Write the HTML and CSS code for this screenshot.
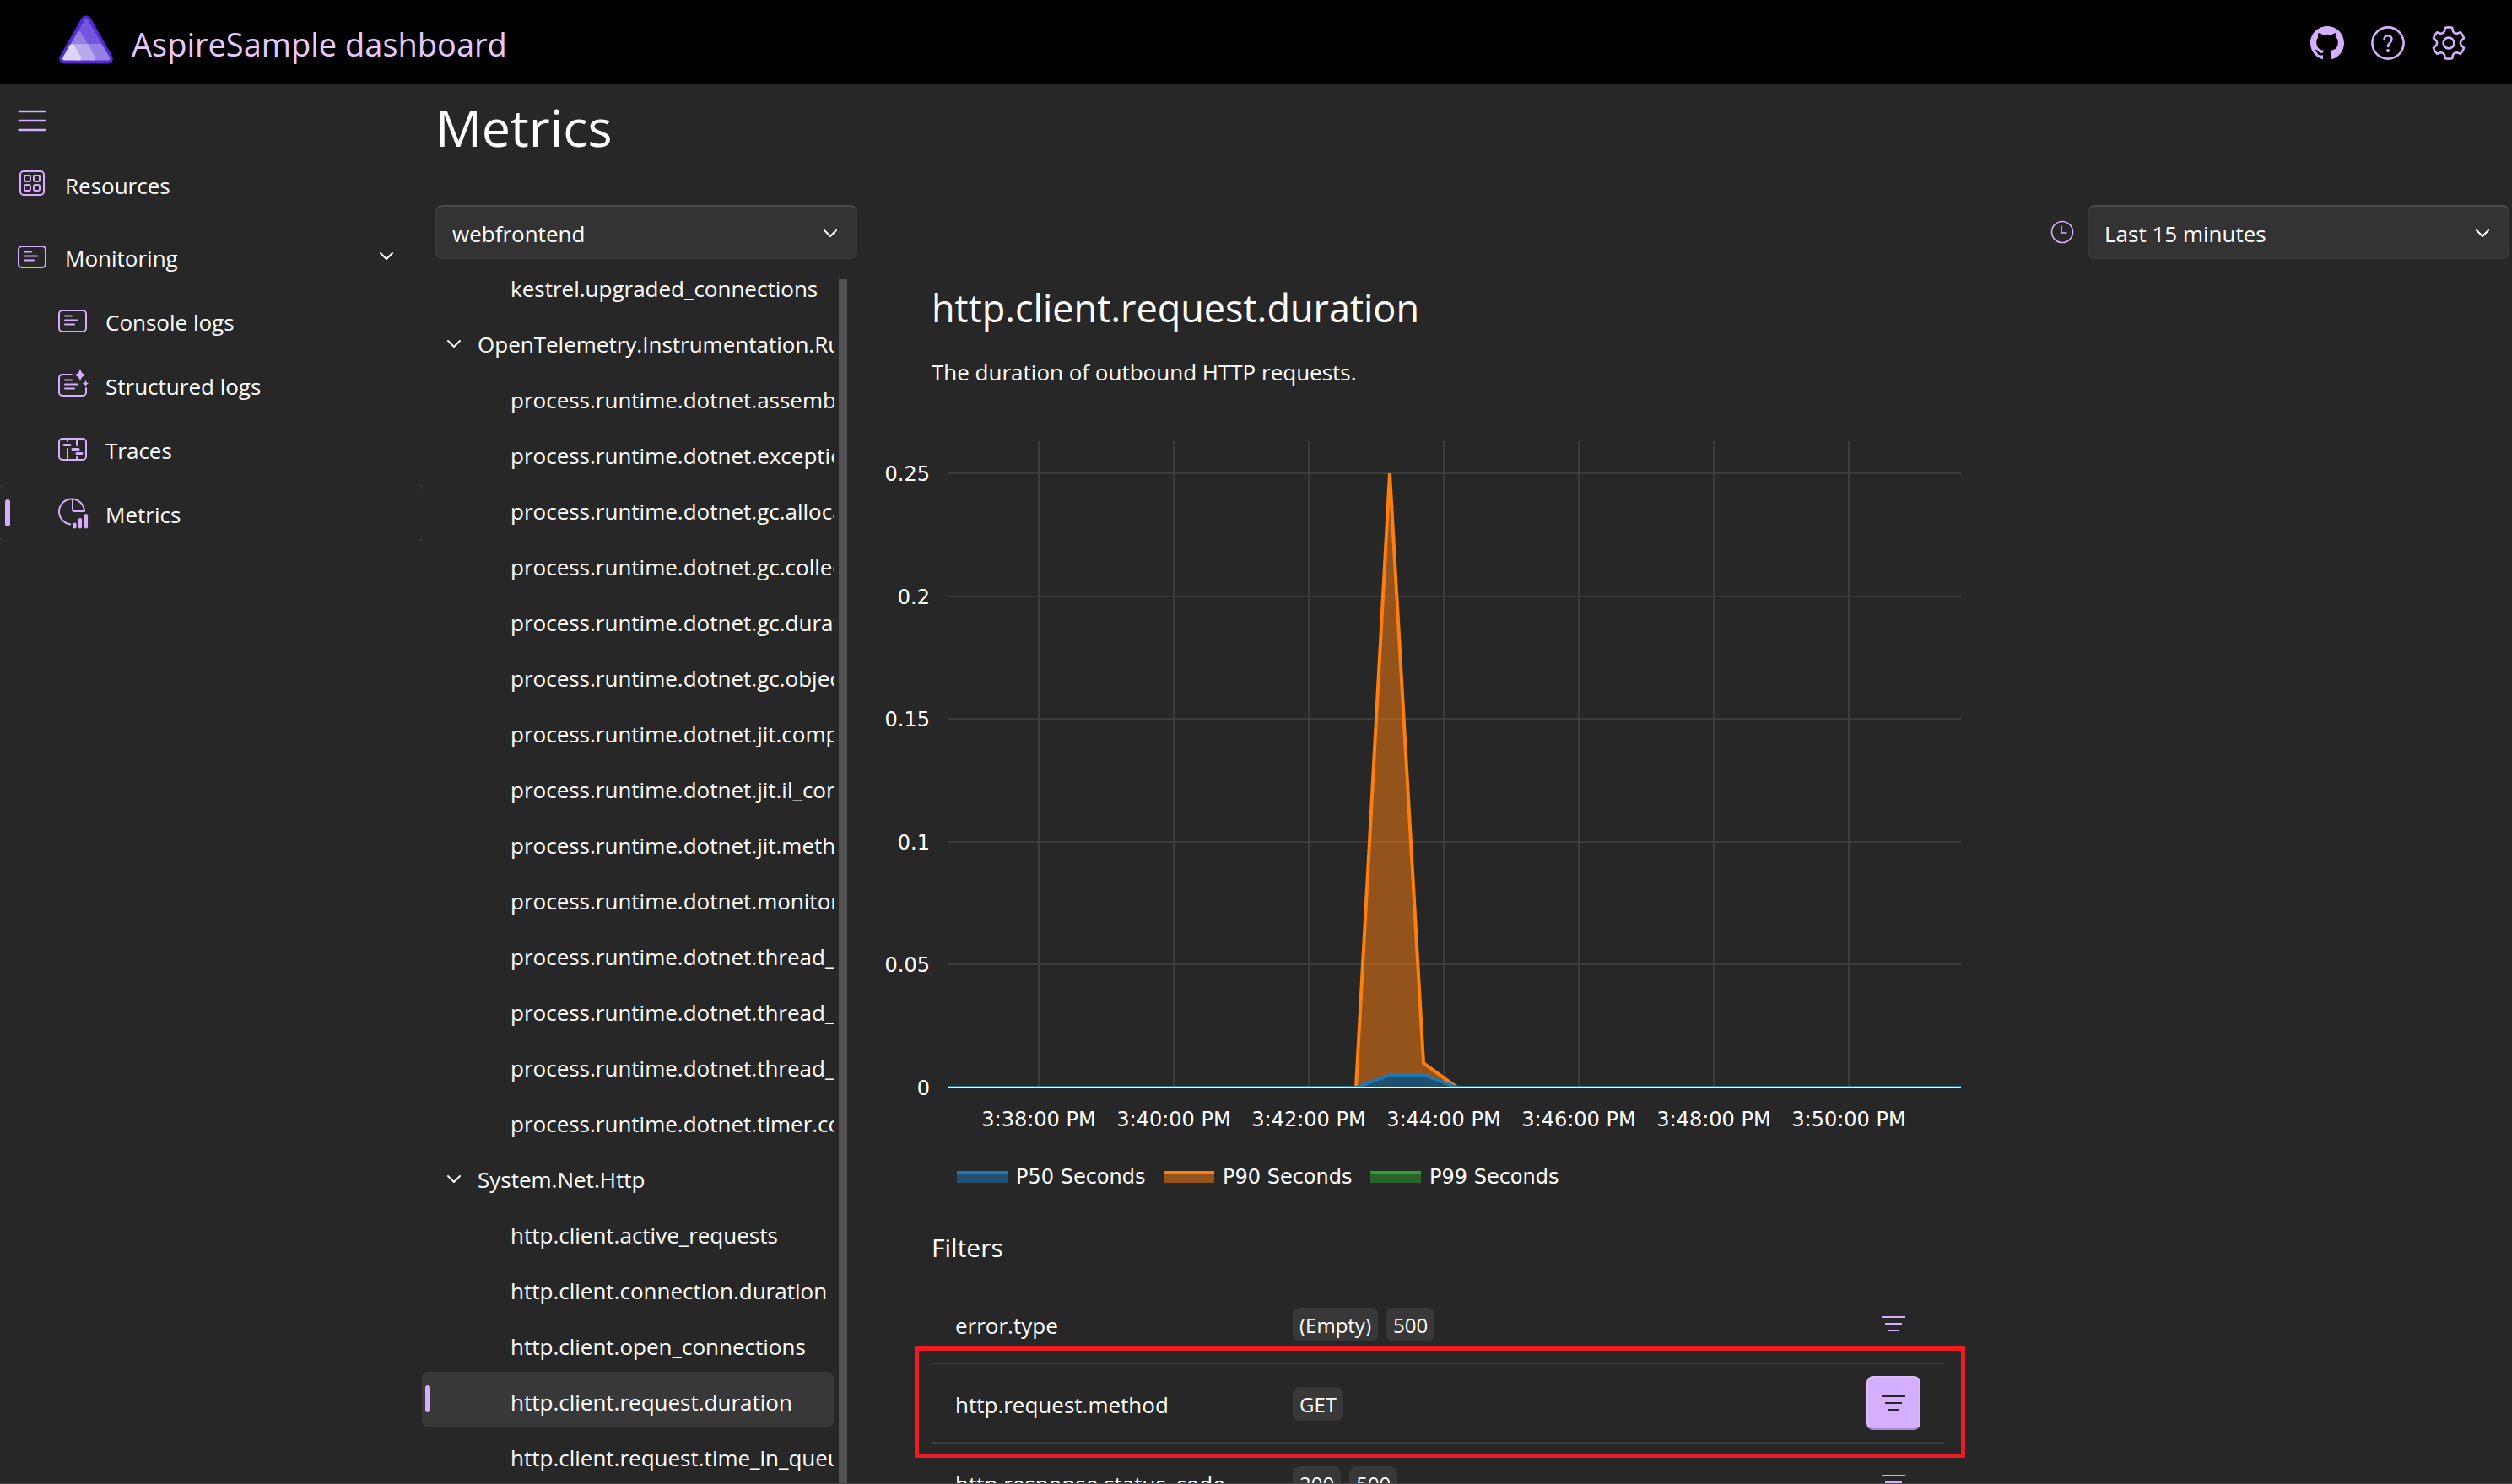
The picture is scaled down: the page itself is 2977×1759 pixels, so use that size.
FILE: index.html
```html
<!DOCTYPE html>
<html lang="en">
<head>
<meta charset="utf-8">
<title>AspireSample dashboard - Metrics</title>
<link rel="stylesheet" href="styles.css">
</head>
<body>
<svg class="sprite" aria-hidden="true">
  <symbol id="chevron" viewBox="0 0 18 12"><path d="M2 2l7 7 7-7" fill="none" stroke="#fff" stroke-width="2" stroke-linecap="round" stroke-linejoin="round"/></symbol>
  <symbol id="filter" viewBox="0 0 28 18"><path d="M0 1h28M4 9h20M8 17h12" fill="none" stroke="currentColor" stroke-width="2"/></symbol>
  <symbol id="console" viewBox="0 0 40 40"><g fill="none" stroke="currentColor" stroke-width="2" stroke-linecap="round"><rect x="4" y="8" width="32" height="25" rx="4"/><path d="M11 14.500h8M11 19.500h15M11 24.500h11"/></g></symbol>
</svg>

<header class="topbar">
  <a class="brand" href="#">
    <svg class="logo" viewBox="0 0 64 58" aria-hidden="true">
      <path d="M26.500 3.500a6.500 6.500 0 0 1 11 0L63 48.500A6 6 0 0 1 58 57.500H6A6 6 0 0 1 1 48.500z" fill="#512bd4"/>
      <path d="M30 6a2.500 2.500 0 0 1 4.400 0L50.500 34H14z" fill="#7455dd"/>
      <path d="M14 34L21.200 21c1.500-2.300 3.800-2.300 5 0L34 34z" fill="#9780e5"/>
      <path d="M28 34H50.500L60 50c1 2 0 3.500-2 3.500H38z" fill="#9780e5"/>
      <path d="M14 34H34.200L43 50c.8 2-.2 3.500-2 3.500H20z" fill="#b9aaee"/>
      <path d="M12.500 35.500c1.500-2 3.800-2 5.200 0L26 50c.8 2-.2 3.500-2 3.500H6.500c-2 0-3-1.500-2-3.500z" fill="#dcd5f6"/>
    </svg>
    <span>AspireSample dashboard</span>
  </a>
  <div class="top-actions">
    <a href="#" aria-label="GitHub repository"><svg viewBox="0 0 16 16" fill="currentColor"><path d="M8 0C3.580 0 0 3.580 0 8c0 3.540 2.290 6.530 5.470 7.590.4.070.55-.17.55-.38 0-.19-.01-.82-.01-1.490-2.010.37-2.530-.49-2.690-.94-.09-.23-.48-.94-.82-1.130-.28-.15-.68-.52-.01-.53.63-.01 1.080.58 1.230.82.72 1.210 1.870.87 2.330.66.07-.52.28-.87.51-1.070-1.780-.2-3.640-.89-3.640-3.950 0-.87.31-1.590.82-2.150-.08-.2-.36-1.020.08-2.120 0 0 .67-.21 2.200.82.64-.18 1.320-.27 2-.27s1.360.09 2 .27c1.530-1.040 2.200-.82 2.200-.82.44 1.100.16 1.920.08 2.120.51.56.82 1.270.82 2.150 0 3.070-1.870 3.750-3.650 3.950.29.25.54.73.54 1.480 0 1.070-.01 1.930-.01 2.200 0 .21.15.46.55.38A8.010 8.010 0 0 0 16 8c0-4.420-3.580-8-8-8z"/></svg></a>
    <button type="button" aria-label="Help"><svg viewBox="0 0 40 40" fill="none" stroke="currentColor" stroke-width="2.600" stroke-linecap="round"><circle cx="20" cy="20" r="18.600"/><path d="M15.500 16c0-3 2-4.700 4.500-4.700s4.500 1.700 4.500 4.400c0 4-4.500 4.300-4.500 8.300"/><circle cx="20" cy="29" r="2" fill="currentColor" stroke="none"/></svg></button>
    <button type="button" aria-label="Settings"><svg viewBox="-20 -20 40 40" fill="none" stroke="currentColor" stroke-width="2.600" stroke-linejoin="round"><path d="M-4.200-18.300Q0-19 4.200-18.300L5-14Q6.600-11 9.800-11.200L14-12.700Q17-9.500 18-5.800L14.800-2.800Q13 0 14.800 2.800L18 5.800Q17 9.500 14 12.700L9.800 11.200Q6.600 11 5 14L4.200 18.300Q0 19-4.200 18.300L-5 14Q-6.600 11-9.800 11.200L-14 12.700Q-17 9.500-18 5.800L-14.800 2.800Q-13 0-14.800-2.800L-18-5.800Q-17-9.500-14-12.700L-9.800-11.200Q-6.600-11-5-14z"/><circle r="6.400"/></svg></button>
  </div>
</header>

<div class="layout">
  <nav class="sidebar" aria-label="Main">
    <button type="button" class="menu-toggle" aria-label="Toggle navigation"><svg viewBox="0 0 34 26" fill="none" stroke="currentColor" stroke-width="2.400" stroke-linecap="round"><path d="M1.500 2h31M1.500 13h31M1.500 24h31"/></svg></button>
    <a class="nav-item nav-root" href="#"><svg viewBox="0 0 40 40" fill="none" stroke="currentColor" stroke-width="2"><rect x="6" y="5" width="28" height="28" rx="4"/><rect x="11" y="10" width="7" height="7" rx="2"/><rect x="22" y="10" width="7" height="7" rx="2"/><rect x="11" y="21" width="7" height="7" rx="2"/><rect x="22" y="21" width="7" height="7" rx="2"/></svg><span>Resources</span></a>
    <a class="nav-item nav-group" href="#"><svg><use href="#console"/></svg><span>Monitoring</span><svg class="chevron"><use href="#chevron"/></svg></a>
    <a class="nav-item nav-child" href="#"><svg><use href="#console"/></svg><span>Console logs</span></a>
    <a class="nav-item nav-child" href="#"><svg viewBox="0 0 40 40" fill="none" stroke="currentColor" stroke-width="2" stroke-linecap="round"><path d="M19 8H8a4 4 0 0 0-4 4v17a4 4 0 0 0 4 4h24a4 4 0 0 0 4-4v-5M11 14.500h8M11 19.500h15M11 24.500h11"/><path d="M29 1c1.500 5 2.500 6 7.500 7.500C31.500 10 30.500 11 29 16c-1.500-5-2.500-6-7.500-7.500C26.500 7 27.500 6 29 1zM35.500 14.500c.8 3 1.300 3.500 4 4-2.700.8-3.200 1.300-4 4-.8-2.700-1.300-3.200-4-4 2.700-.5 3.200-1 4-4z" fill="currentColor" stroke="none"/></svg><span>Structured logs</span></a>
    <a class="nav-item nav-child" href="#"><svg viewBox="0 0 40 40" fill="none" stroke="currentColor" stroke-width="2" stroke-linecap="round"><rect x="4" y="8" width="32" height="25" rx="4"/><path d="M14 8v3M14 20v13M25 8v8M25 30v3"/><path d="M10 15.500h7M20 20.500h7M25 25.500h6" stroke-width="3.200"/></svg><span>Traces</span></a>
    <div class="nav-current"><a class="nav-item nav-child" href="#" aria-current="page"><svg viewBox="0 0 40 40" fill="none" stroke="currentColor" stroke-width="2" stroke-linejoin="round"><path d="M18 33.400A15 15 0 1 1 34 18H22a2 2 0 0 1-2-2V3.500"/><path d="M22.500 33.500v3M29 28v8.500M36 23v13.500" stroke-width="4.200" stroke-linecap="round"/></svg><span>Metrics</span></a></div>
  </nav>

  <main class="main">
    <h1>Metrics</h1>
    <div class="toolbar">
      <label class="select"><select aria-label="Application"><option>webfrontend</option></select><svg class="chevron"><use href="#chevron"/></svg></label>
      <div class="range">
        <svg class="clock" viewBox="0 0 28 28" fill="none" stroke="#d6aefe" stroke-width="1.600" aria-hidden="true"><circle cx="14" cy="14" r="12.500"/><path d="M13 7v8h6" stroke-linecap="round"/></svg>
        <label class="select"><select aria-label="Time range"><option>Last 15 minutes</option></select><svg class="chevron"><use href="#chevron"/></svg></label>
      </div>
    </div>

    <div class="content">
      <aside class="tree-pane">
        <ul class="tree">
          <li class="leaf">kestrel.upgraded_connections</li>
          <li class="group"><svg class="chevron"><use href="#chevron"/></svg>OpenTelemetry.Instrumentation.Runtime</li>
          <li class="leaf">process.runtime.dotnet.assemblies</li>
          <li class="leaf">process.runtime.dotnet.exceptions</li>
          <li class="leaf">process.runtime.dotnet.gc.allocated</li>
          <li class="leaf">process.runtime.dotnet.gc.collected</li>
          <li class="leaf">process.runtime.dotnet.gc.duration</li>
          <li class="leaf">process.runtime.dotnet.gc.objects</li>
          <li class="leaf">process.runtime.dotnet.jit.compiled</li>
          <li class="leaf">process.runtime.dotnet.jit.il_comp</li>
          <li class="leaf">process.runtime.dotnet.jit.methods</li>
          <li class="leaf">process.runtime.dotnet.monitor</li>
          <li class="leaf">process.runtime.dotnet.thread_pool</li>
          <li class="leaf">process.runtime.dotnet.thread_pool</li>
          <li class="leaf">process.runtime.dotnet.thread_pool</li>
          <li class="leaf">process.runtime.dotnet.timer.count</li>
          <li class="group"><svg class="chevron"><use href="#chevron"/></svg>System.Net.Http</li>
          <li class="leaf">http.client.active_requests</li>
          <li class="leaf">http.client.connection.duration</li>
          <li class="leaf">http.client.open_connections</li>
          <li class="leaf selected">http.client.request.duration</li>
          <li class="leaf">http.client.request.time_in_queue</li>
        </ul>
        <div class="scrollbar"></div>
      </aside>

      <section class="details">
        <h2>http.client.request.duration</h2>
        <p>The duration of outbound HTTP requests.</p>
        <svg class="chart" viewBox="0 0 1300 900" role="img" aria-label="Request duration percentiles">
          <g class="grid">
            <path d="M84 50H1284M84 196H1284M84 341H1284M84 487H1284M84 632H1284"/>
            <path d="M191 12V777M351 12V777M511 12V777M671 12V777M831 12V777M991 12V777M1151 12V777"/>
          </g>
          <path d="M84 778.500H1284" stroke="#fff" stroke-width="1"/>
          <clipPath id="plot"><rect x="84" y="50" width="1200" height="728"/></clipPath>
          <g clip-path="url(#plot)">
            <path d="M567 778L607 50 647 749 687 778z" fill="#ff7f0e" fill-opacity=".5"/>
            <path d="M84 778H567L607 50 647 749 687 778H1284" fill="none" stroke="#ff7f0e" stroke-width="4"/>
            <path d="M567 778L607 763H647L687 778z" fill="#204f6f"/>
            <path d="M84 778H567L607 763H647L687 778H1284" fill="none" stroke="#1f77b4" stroke-width="4"/>
          </g>
          <g class="ticks ticks-y">
            <text x="62" y="59">0.25</text><text x="62" y="205">0.2</text><text x="62" y="350">0.15</text><text x="62" y="496">0.1</text><text x="62" y="641">0.05</text><text x="62" y="787">0</text>
          </g>
          <g class="ticks ticks-x">
            <text x="191" y="824">3:38:00 PM</text><text x="351" y="824">3:40:00 PM</text><text x="511" y="824">3:42:00 PM</text><text x="671" y="824">3:44:00 PM</text><text x="831" y="824">3:46:00 PM</text><text x="991" y="824">3:48:00 PM</text><text x="1151" y="824">3:50:00 PM</text>
          </g>
          <g class="ticks">
            <path d="M94 879h60v12h-60z" fill="#23506e"/><path d="M94 879h60" stroke="#1f77b4" stroke-width="4"/><text x="164" y="892">P50 Seconds</text>
            <path d="M339 879h60v12h-60z" fill="#93531a"/><path d="M339 879h60" stroke="#ff7f0e" stroke-width="4"/><text x="409" y="892">P90 Seconds</text>
            <path d="M584 879h60v12h-60z" fill="#27632a"/><path d="M584 879h60" stroke="#2ca02c" stroke-width="4"/><text x="654" y="892">P99 Seconds</text>
          </g>
        </svg>

        <h3>Filters</h3>
        <table class="filters">
          <tr><th scope="row">error.type</th><td><span class="badge">(Empty)</span><span class="badge">500</span></td><td class="action"><button type="button" aria-label="Filter error.type"><svg><use href="#filter"/></svg></button></td></tr>
          <tr class="callout"><th scope="row">http.request.method</th><td><span class="badge">GET</span></td><td class="action"><button type="button" class="active" aria-label="Filter http.request.method"><svg><use href="#filter"/></svg></button></td></tr>
          <tr><th scope="row">http.response.status_code</th><td><span class="badge">200</span><span class="badge">500</span></td><td class="action"><button type="button" aria-label="Filter http.response.status_code"><svg><use href="#filter"/></svg></button></td></tr>
        </table>
      </section>
    </div>
  </main>
</div>
</body>
</html>
```
FILE: styles.css
```css
:root {
  --bg: #272727;
  --hover: #383838;
  --accent: #d6aefe;
}

* { box-sizing: border-box; }

body {
  display: flex;
  flex-direction: column;
  height: 100vh;
  margin: 0;
  overflow: hidden;
  border-bottom: 1px solid #4a4a4a;
  background: var(--bg);
  color: #fff;
  font: 26px/36px "Open Sans", "Noto Sans", sans-serif;
}

h1, h2, h3, p, ul { margin: 0; padding: 0; font-weight: 400; }
a { color: inherit; text-decoration: none; }
button { padding: 0; border: 0; background: none; color: var(--accent); font: inherit; }
svg { display: block; flex: none; }
.sprite { position: absolute; width: 0; height: 0; }
.chevron { width: 18px; height: 12px; }

/* Top bar */
.topbar {
  display: flex;
  flex: none;
  align-items: center;
  justify-content: space-between;
  height: 99px;
  padding: 2px 55px 0 70px;
  background: #000;
}
.brand { display: flex; align-items: center; gap: 22px; color: #e6c8ff; font-size: 38px; line-height: 52px; }
.brand span { padding-top: 2px; }
.logo { width: 64px; height: 58px; margin-bottom: 8px; }
.top-actions { display: flex; gap: 32px; color: var(--accent); }
.top-actions svg { width: 40px; height: 40px; }

/* Side navigation */
.layout { display: flex; flex: 1; min-height: 0; }
.sidebar { flex: none; width: 500px; padding-top: 31px; }
.menu-toggle { display: block; margin: 0 0 29px 21px; }
.menu-toggle svg { width: 34px; height: 26px; }
.nav-item { display: flex; align-items: center; gap: 19px; height: 66px; margin-bottom: 10px; padding-left: 18px; border-radius: 8px; }
.nav-item > svg:first-child { width: 40px; height: 40px; color: var(--accent); }
.nav-item span { padding-top: 4px; }
.nav-item.nav-root { margin-bottom: 20px; }
.nav-group .chevron { margin-left: auto; margin-right: 33px; }
.nav-item.nav-child { padding-left: 66px; }
.nav-current { background: #333; }
.nav-current .nav-item { position: relative; margin: 0; background: var(--bg); }
.nav-current .nav-item::before,
.selected::before {
  content: "";
  position: absolute;
  top: 17px;
  left: 6px;
  width: 6px;
  height: 32px;
  border-radius: 3px;
  background: var(--accent);
}
.selected::before { top: 16px; left: 4px; }

/* Main column */
.main { display: flex; flex: 1; flex-direction: column; min-width: 0; }
h1 { padding: 10px 0 0 16px; font-size: 61px; line-height: 84px; }
.toolbar { display: flex; justify-content: space-between; margin-top: 50px; padding: 0 3px 0 16px; }
.range { display: flex; align-items: center; gap: 16px; }
.clock { width: 28px; height: 28px; }
.select { position: relative; width: 500px; }
.select select {
  display: block;
  width: 100%;
  height: 64px;
  padding: 3px 50px 0 18px;
  border: 2px solid #3a3a3a;
  border-top-color: #4a4a4a;
  border-radius: 8px;
  appearance: none;
  background: #333;
  color: #fff;
  font: inherit;
}
.select .chevron { position: absolute; top: 28px; right: 23px; }
.content { display: flex; flex: 1; min-height: 0; margin-top: 24px; overflow: hidden; }

/* Metric tree, scrolled part way down */
.tree-pane { display: flex; flex: none; gap: 6px; width: 504px; overflow: hidden; }
.tree { width: 488px; height: 0; margin-top: -25px; list-style: none; white-space: nowrap; }
.tree li { position: relative; display: flex; align-items: center; width: 488px; height: 66px; padding-top: 5px; overflow: hidden; border-radius: 8px; }
.tree .leaf { padding-left: 105px; }
.tree .group { gap: 19px; padding-left: 29px; }
.tree .selected { background: var(--hover); }
.scrollbar { width: 10px; background: #525252; }

/* Metric details */
.details { flex: 1; min-width: 0; padding-left: 36px; }
.details h2 { padding: 4px 0 0 64px; font-size: 45px; line-height: 60px; }
.details p { padding: 26px 0 0 64px; line-height: 40px; }
.chart { width: 1300px; height: 900px; margin-top: 50px; }
.grid { fill: none; stroke: #3c3c3c; stroke-width: 2; }
.ticks { fill: #fff; font: 24px "DejaVu Sans", Verdana, sans-serif; }
.ticks-y { text-anchor: end; }
.ticks-x { text-anchor: middle; }
.details h3 { padding: 46px 0 0 64px; font-size: 30px; line-height: 44px; }
.filters { width: 1200px; margin: 22px 0 0 64px; border-spacing: 0; table-layout: fixed; }
.filters th, .filters td { height: 94px; padding: 0; border-bottom: 2px solid #3c3c3c; text-align: left; font-weight: 400; }
.filters th { width: 428px; padding: 4px 0 0 28px; }
.filters .action { width: 200px; }
.badge { display: inline-block; height: 40px; margin-right: 10px; padding: 2px 8px 0; border-radius: 8px; background: var(--hover); font-size: 24px; line-height: 38px; vertical-align: middle; }
.action button { display: flex; align-items: center; justify-content: center; width: 64px; height: 64px; margin: 0 28px 0 auto; border-radius: 8px; }
.action button.active { border: 2px solid #debeff; border-bottom-color: #ab8bcb; background: var(--accent); color: var(--bg); }
.action svg { width: 28px; height: 18px; }

/* Red frame laid over the highlighted filter row */
.callout { position: relative; }
.callout .action::after { content: ""; position: absolute; inset: -21px -25px -17px -20px; border: 5px solid #ed1c24; pointer-events: none; }
```
